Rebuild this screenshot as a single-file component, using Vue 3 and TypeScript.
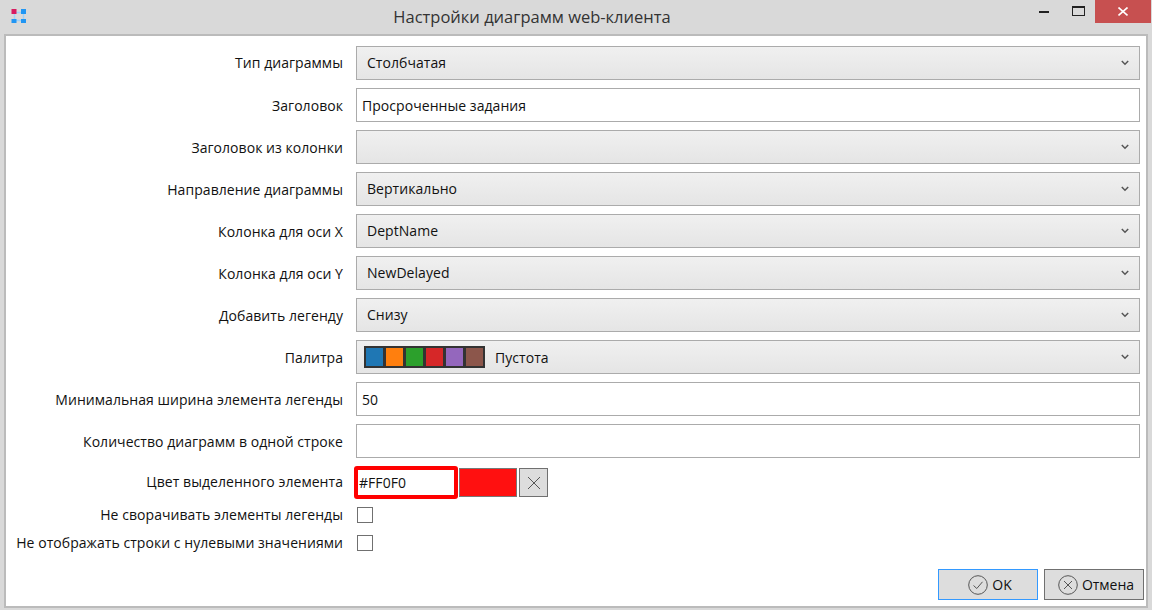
<script setup lang="ts">
interface Row { label: string; kind: 'select' | 'input' | 'palette'; value: string }
const rows: Row[] = [
  { label: 'Тип диаграммы', kind: 'select', value: 'Столбчатая' },
  { label: 'Заголовок', kind: 'input', value: 'Просроченные задания' },
  { label: 'Заголовок из колонки', kind: 'select', value: '' },
  { label: 'Направление диаграммы', kind: 'select', value: 'Вертикально' },
  { label: 'Колонка для оси X', kind: 'select', value: 'DeptName' },
  { label: 'Колонка для оси Y', kind: 'select', value: 'NewDelayed' },
  { label: 'Добавить легенду', kind: 'select', value: 'Снизу' },
  { label: 'Палитра', kind: 'palette', value: 'Пустота' },
  { label: 'Минимальная ширина элемента легенды', kind: 'input', value: '50' },
  { label: 'Количество диаграмм в одной строке', kind: 'input', value: '' },
]
const palette = ['#1f77b4', '#ff7f0e', '#2ca02c', '#d62728', '#9467bd', '#8c564b']
</script>

<template>
  <div class="window">
    <header class="titlebar">
      <svg class="logo" width="16" height="16" viewBox="0 0 16 16">
        <path d="M5 5.5H13M5 13.5H13M4.5 5V13M13.5 5V13" stroke="#9fd2fb" stroke-width="1.4" fill="none" />
        <rect x="1.5" y="2" width="5" height="5" fill="#d81b60" />
        <rect x="11" y="2" width="5" height="5" fill="#2196f3" />
        <rect x="1.5" y="12" width="5" height="5" fill="#2196f3" />
        <rect x="11" y="12" width="5" height="5" fill="#2196f3" />
      </svg>
      <span class="title">Настройки диаграмм web-клиента</span>
      <div class="controls">
        <span class="ctl"><svg width="10" height="3"><rect width="10" height="2" y="1" fill="#222" /></svg></span>
        <span class="ctl"><svg width="13" height="11"><rect x="0.5" y="0.5" width="12" height="9" fill="none" stroke="#222" /><rect x="0" y="0" width="13" height="2" fill="#222" /></svg></span>
        <span class="close">
          <svg width="10" height="10" viewBox="0 0 10 10"><path d="M0.5 0.5L9.5 8.5M9.5 0.5L0.5 8.5" stroke="#fff" stroke-width="1.6" /></svg>
        </span>
      </div>
    </header>
    <main class="content">
      <div class="form">
        <div v-for="r in rows" :key="r.label" class="row">
          <label class="label">{{ r.label }}</label>
          <div v-if="r.kind === 'input'" class="field">{{ r.value }}</div>
          <div v-else class="select">
            <span v-if="r.kind === 'palette'" class="palette">
              <i v-for="c in palette" :key="c" :style="{ background: c }"></i>
            </span>
            <span class="sel-text" :class="{ 'after-palette': r.kind === 'palette' }">{{ r.value }}</span>
            <svg class="chev" width="8" height="6" viewBox="0 0 8 6"><path d="M0.8 1L4 4.2L7.2 1" stroke="#555" stroke-width="1.5" fill="none" /></svg>
          </div>
        </div>
        <div class="row color-row">
          <label class="label">Цвет выделенного элемента</label>
          <div class="color-group">
            <div class="color-input">#FF0F0</div>
            <div class="swatch"></div>
            <div class="clear">
              <svg width="14" height="14" viewBox="0 0 14 14"><path d="M1 1L13 13M13 1L1 13" stroke="#555" stroke-width="1" /></svg>
            </div>
          </div>
        </div>
        <div class="check-group">
          <div class="check-row">
            <label class="label">Не сворачивать элементы легенды</label>
            <span class="check"></span>
          </div>
          <div class="check-row">
            <label class="label">Не отображать строки с нулевыми значениями</label>
            <span class="check"></span>
          </div>
        </div>
      </div>
      <footer class="footer">
        <button class="btn primary">
          <svg width="20" height="20" viewBox="0 0 20 20"><circle cx="10" cy="10" r="9.3" fill="none" stroke="#555" /><path d="M5.5 10.5L8.8 13.5L14.5 6.8" fill="none" stroke="#555" /></svg>
          <span>OK</span>
        </button>
        <button class="btn">
          <svg width="20" height="20" viewBox="0 0 20 20"><circle cx="10" cy="10" r="9.3" fill="none" stroke="#555" /><path d="M6 6L14 14M14 6L6 14" fill="none" stroke="#555" /></svg>
          <span>Отмена</span>
        </button>
      </footer>
    </main>
  </div>
</template>

<style>
html, body { margin: 0; padding: 0; background: #d9d9d9; }
</style>

<style scoped>
.window {
  width: 1152px;
  height: 610px;
  box-sizing: border-box;
  background: #d9d9d9;
  display: flex;
  flex-direction: column;
  overflow: hidden;
  font-family: "Open Sans", "Noto Sans", sans-serif;
  font-size: 14px;
  letter-spacing: 0.05px;
  color: #111;
}
.titlebar {
  height: 34px;
  flex: none;
  display: flex;
  align-items: flex-start;
  position: relative;
}
.logo { position: absolute; left: 10px; top: 7px; }
.title {
  width: 100%;
  box-sizing: border-box;
  padding-right: 88px;
  text-align: center;
  font-size: 16.5px;
  line-height: 34px;
  color: #333;
  letter-spacing: 0;
}
.controls {
  position: absolute;
  right: 1px;
  top: 0;
  display: flex;
  height: 23px;
}
.ctl {
  width: 34px;
  display: flex;
  align-items: center;
  justify-content: center;
}
.close {
  width: 56px;
  height: 23px;
  background: #c75050;
  display: flex;
  align-items: center;
  justify-content: center;
}
.content {
  margin: 0 4px;
  height: 574px;
  box-sizing: border-box;
  border: 2px solid #bbb;
  background: #fff;
  display: flex;
  flex-direction: column;
}
.form {
  padding-top: 10px;
  display: flex;
  flex-direction: column;
  gap: 8px;
}
.row {
  display: flex;
  align-items: center;
  height: 34px;
  gap: 13px;
}
.row:first-child .label { margin-top: -1px; }
.label {
  width: 337px;
  flex: none;
  text-align: right;
  line-height: 18px;
  margin-top: 1px;
  color: #111;
}
.select, .field {
  width: 784px;
  height: 34px;
  box-sizing: border-box;
  border: 1px solid #ababab;
  display: flex;
  align-items: center;
  line-height: 18px;
}
.select {
  background: linear-gradient(#f0f0f0, #e5e5e5);
  padding: 0 10px;
  position: relative;
}
.field {
  padding: 1px 5px 0;
  background: #fff;
}
.sel-text { color: #111; }
.sel-text.after-palette { margin-top: 2px; }
.chev { position: absolute; right: 10px; top: 13px; }
.palette {
  display: flex;
  height: 20px;
  margin-left: -3px;
  margin-right: 10px;
  border: 1px solid #333;
  background: #333;
  gap: 1px;
}
.palette i {
  display: block;
  width: 19px;
  height: 20px;
  border: 1px solid #333;
  box-sizing: border-box;
}
.color-row { align-items: flex-start; }
.color-row .label { margin-top: 7px; }
.color-group {
  display: flex;
  align-items: center;
  gap: 0;
  margin-left: -2px;
}
.color-input {
  width: 104px;
  height: 33px;
  box-sizing: border-box;
  border: 4px solid #f00;
  border-radius: 3px;
  display: flex;
  align-items: center;
  padding-left: 1px;
  background: #fff;
}
.swatch {
  width: 58px;
  height: 29px;
  margin-left: 1px;
  box-sizing: border-box;
  background: #ff1010;
  border: 1px solid #777;
}
.clear {
  width: 29px;
  height: 29px;
  margin-left: 2px;
  box-sizing: border-box;
  background: #ddd;
  border: 1px solid #707070;
  display: flex;
  align-items: center;
  justify-content: center;
}
.check-group {
  margin-top: -7px;
  display: flex;
  flex-direction: column;
}
.check-row {
  display: flex;
  align-items: center;
  height: 28px;
  gap: 14px;
}
.check-row .label { margin-top: -1px; }
.check {
  display: block;
  width: 16px;
  height: 16px;
  box-sizing: border-box;
  border: 1px solid #707070;
  background: #fff;
}
.footer {
  margin-top: auto;
  padding: 0 2px 6px 0;
  display: flex;
  justify-content: flex-end;
  gap: 6px;
}
.btn {
  width: 100px;
  height: 31px;
  box-sizing: border-box;
  background: #ddd;
  border: 1px solid #707070;
  display: flex;
  align-items: center;
  justify-content: center;
  gap: 4px;
  font: inherit;
  font-size: 14px;
  color: #111;
  padding: 0 0 0 4px;
}
.btn.primary { border-color: #3399ff; }
</style>
